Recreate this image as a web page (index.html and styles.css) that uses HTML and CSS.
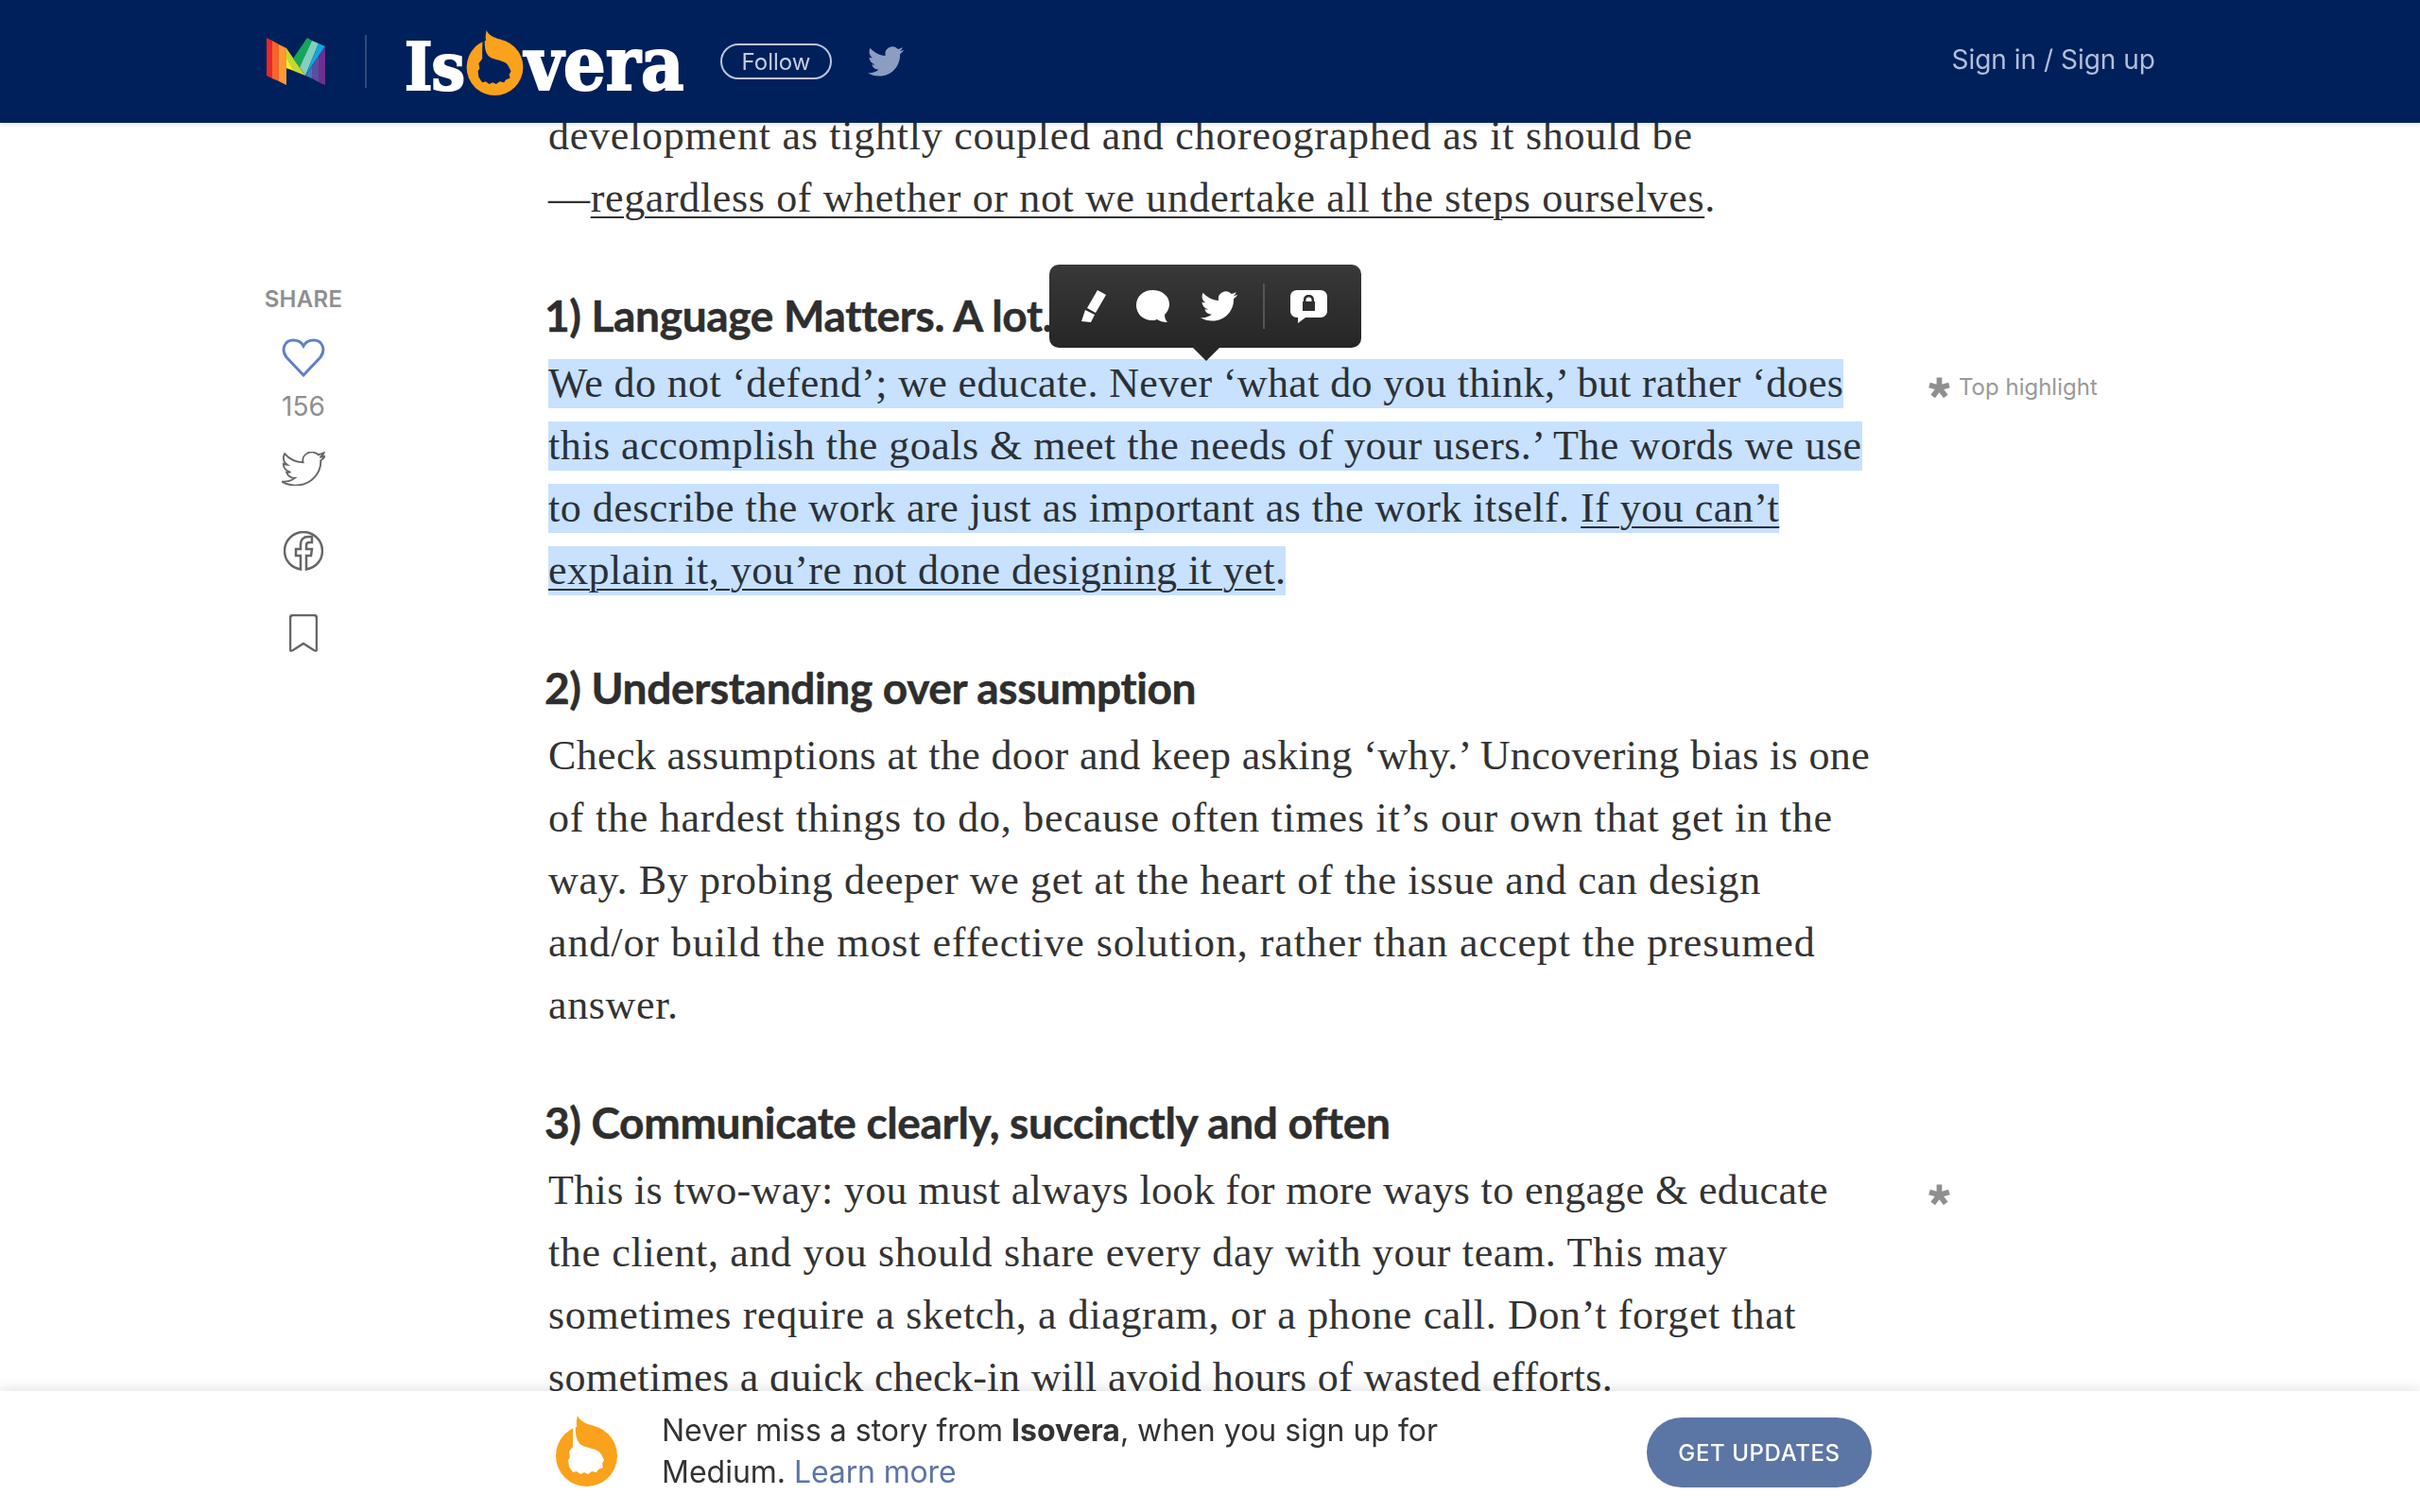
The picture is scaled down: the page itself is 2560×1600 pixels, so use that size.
FILE: index.html
```html
<!DOCTYPE html>
<html>
<head>
    <title>Isovera</title>
    <link rel="stylesheet" href="styles.css">
</head>
<body>
    <svg class="defs" width="0" height="0">
        <symbol id="flame" viewBox="0 0 65 75">
            <circle cx="32.5" cy="42.5" r="32.5" fill="#faa21b"/>
            <path fill="currentColor" d="M18.500 9L21 9C20 20 22 28 27 31C33 35 44 34 48 41L51 47L49 51L50 55L45 57L43 60L38 59L34 62L30 60L26 62L22 59L18 60L14 54L13 47L15 44L14 38L18 33C18 25 18 17 18.500 9Z"/>
            <path fill="#faa21b" d="M23 0C25 6 33 9 40 11L34 16L23 14C21 9 22 4 23 0Z"/>
        </symbol>
        <symbol id="bird" viewBox="0 2 24 20" preserveAspectRatio="none">
            <path d="M23.953 4.57a10 10 0 01-2.825.775 4.958 4.958 0 002.163-2.723c-.951.555-2.005.959-3.127 1.184a4.92 4.92 0 00-8.384 4.482C7.69 8.095 4.067 6.13 1.64 3.162a4.822 4.822 0 00-.666 2.475c0 1.71.87 3.213 2.188 4.096a4.904 4.904 0 01-2.228-.616v.06a4.923 4.923 0 003.946 4.827 4.996 4.996 0 01-2.212.085 4.936 4.936 0 004.604 3.417 9.867 9.867 0 01-6.102 2.105c-.39 0-.779-.023-1.17-.067a13.995 13.995 0 007.557 2.209c9.053 0 13.998-7.496 13.998-13.985 0-.21 0-.42-.015-.63A9.935 9.935 0 0024 4.59z"/>
        </symbol>
        <symbol id="star" viewBox="0 0 22 22">
            <path fill="none" stroke="currentColor" stroke-width="5.5" d="M11 12V1.500M11 12L21 9M11 12L17.500 20.500M11 12L4.500 20.500M11 12L1 9"/>
        </symbol>
    </svg>

    <header class="topbar">
        <svg class="m-logo" width="62" height="50" viewBox="0 0 62 50">
            <polygon fill="#e8262b" points="0,0 6,3 6,43 0,40"/>
            <polygon fill="#f4652c" points="6,3 13,7 13,46 6,43"/>
            <polygon fill="#f99a33" points="13,7 21,11 21,50 13,46"/>
            <polygon fill="#c4d82e" points="21,11 41,40 21,32"/>
            <polygon fill="#f4ee2a" points="21,22 28,34 21,32"/>
            <polygon fill="#12a85a" points="43,0 48,3 35,31 28,22"/>
            <polygon fill="#85d0bd" points="48,3 55,6 41,40 35,31"/>
            <polygon fill="#0fa8e0" points="55,6 62,9 41,40"/>
            <polygon fill="#3f77bb" points="41,40 48,30 48,43"/>
            <polygon fill="#5a4ea0" points="48,30 55,19.500 55,47 48,43"/>
            <polygon fill="#6c2f91" points="55,19.500 62,9 62,50 55,47"/>
        </svg>
        <span class="bar-divider"></span>
        <a class="brand">
            <span>Is</span><svg class="brand-flame" width="63" height="69"><use href="#flame"/></svg><span class="brand-end">vera</span>
        </a>
        <button class="follow">Follow</button>
        <svg class="bar-bird" width="38" height="32"><use href="#bird"/></svg>
        <a class="signin">Sign in / Sign up</a>
    </header>

    <main class="page">
        <aside class="rail">
            <div class="rail-label">SHARE</div>
            <svg class="rail-heart" width="46" height="41" viewBox="0 0 46 41">
                <path d="M23 39L5 20C-1 12 3 2 12 2C17 2 21 4 23 8C25 4 29 2 34 2C43 2 47 12 41 20Z"/>
            </svg>
            <div class="rail-count">156</div>
            <svg class="rail-icon rail-bird" width="46" height="36"><use href="#bird"/></svg>
            <svg class="rail-icon rail-fb" width="42" height="42" viewBox="0 0 42 42">
                <path d="M18 40.500C8 39 1 31 1 21C1 10 10 1 21 1C32 1 41 10 41 21C41 31 34 39 24 40.500V26H29L30 19H24V15C24 13 25 12 27 12H30V6H26C21 6 18 9 18 14V19H13V26H18Z"/>
            </svg>
            <svg class="rail-icon rail-mark" width="30" height="40" viewBox="0 0 30 40">
                <path d="M4 1H26C28 1 29 2 29 4V37C29 39 28 39 26 38L15 31L4 38C2 39 1 39 1 37V4C1 2 2 1 4 1Z"/>
            </svg>
        </aside>

        <article class="story">
            <div class="row">
                <p class="para"><span class="fit-3">development as tightly coupled and choreographed as it should be</span><br><span class="fit-2">—<u>regardless of whether or not we undertake all the steps ourselves</u>.</span></p>
            </div>

            <h3 class="head">1) Language Matters. A lot.
                <div class="popover">
                    <svg class="pop-pen" width="26" height="34" viewBox="0 0 26 34"><path d="M17 0L26 5L15 24L6 19ZM4 21L14 26L10 34L0 33Z"/></svg>
                    <svg class="pop-talk" width="35" height="34" viewBox="0 0 35 34"><path d="M17 0C27 0 35 6 35 15C35 20 32 24 30 26C30 29 31 32 33 34C28 34 25 33 22 31C20 32 18 32 17 32C7 32 0 25 0 16C0 7 7 0 17 0Z"/></svg>
                    <svg class="pop-bird" width="39" height="32"><use href="#bird"/></svg>
                    <span class="pop-line"></span>
                    <svg class="pop-lock" width="39" height="35" viewBox="0 0 39 35">
                        <path fill="#fff" d="M7 0H32C36 0 39 3 39 7V22C39 26 36 29 32 29H16L8 35V29H7C3 29 0 26 0 22V7C0 3 3 0 7 0Z"/>
                        <path fill="#2f2f2f" d="M13 12H14V10C14 7 16 5 19.500 5C23 5 25 7 25 10V12H26V22H13ZM16.500 12H22.500V10C22.500 8.500 21 7.500 19.500 7.500C18 7.500 16.500 8.500 16.500 10Z"/>
                    </svg>
                </div>
            </h3>
            <div class="row">
                <p class="para"><mark>We do not ‘defend’; we educate. Never ‘what do you think,’ but rather ‘does<br><span class="fit-1">this accomplish the goals &amp; meet the needs of your users.’ The words we use</span><br><span class="fit-1">to describe the work are just as important as the work itself. <u>If you can’t</u></span><br><span class="fit-1"><u>explain it, you’re not done designing it yet</u>.</span></mark></p>
                <div class="note"><svg class="note-star" width="23" height="23"><use href="#star"/></svg><span>Top highlight</span></div>
            </div>

            <h3 class="head">2) Understanding over assumption</h3>
            <div class="row">
                <p class="para">Check assumptions at the door and keep asking ‘why.’ Uncovering bias is one<br><span class="fit-3">of the hardest things to do, because often times it’s our own that get in the</span><br><span class="fit-2">way. By probing deeper we get at the heart of the issue and can design</span><br><span class="fit-4">and/or build the most effective solution, rather than accept the presumed</span><br><span class="fit-2">answer.</span></p>
            </div>

            <h3 class="head">3) Communicate clearly, succinctly and often</h3>
            <div class="row">
                <p class="para">This is two-way: you must always look for more ways to engage &amp; educate<br><span class="fit-2">the client, and you should share every day with your team. This may</span><br><span class="fit-2">sometimes require a sketch, a diagram, or a phone call. Don’t forget that</span><br>sometimes a quick check-in will avoid hours of wasted efforts.</p>
                <div class="note"><svg class="note-star" width="23" height="23"><use href="#star"/></svg></div>
            </div>
        </article>
    </main>

    <footer class="promo">
        <svg class="promo-flame" width="67" height="75"><use href="#flame"/></svg>
        <p class="promo-text">Never miss a story from <b>Isovera</b>, when you sign up for<br>Medium. <a>Learn more</a></p>
        <button class="updates">GET UPDATES</button>
    </footer>
</body>
</html>
```

FILE: styles.css
```css
html, body {
    height: 100%;
}

body {
    margin: 0;
    background: #fff;
    color: #2b2b2b;
    font-family: Inter, sans-serif;
    overflow: hidden;
}

.defs {
    position: absolute;
}

/* top bar */
.topbar {
    position: fixed;
    top: 0;
    left: 0;
    right: 0;
    z-index: 5;
    height: 130px;
    box-sizing: border-box;
    padding: 0 280px 0 282px;
    display: flex;
    align-items: center;
    background: #00205b;
    box-shadow: 0 2px 4px rgba(0,0,0,0.1);
}

.m-logo {
    flex: none;
}

.bar-divider {
    width: 2px;
    height: 56px;
    margin: 0 42px 0 42px;
    background: #2f4a7c;
}

.brand {
    display: flex;
    align-items: baseline;
    width: 295px;
    margin-left: -2px;
    margin-right: 2px;
    color: #fff;
    font-family: "DejaVu Serif Condensed", "DejaVu Serif", serif;
    font-weight: 700;
    font-size: 70px;
    line-height: 69px;
    letter-spacing: -1px;
    -webkit-text-stroke: 2px #fff;
}

.brand-flame {
    flex: none;
    margin-left: 1px;
    color: #00205b;
    transform: translateY(6px);
}

.brand-end {
    font-size: 78px;
    letter-spacing: 0.2px;
}

.follow {
    width: 118px;
    height: 38px;
    margin-left: 37px;
    padding: 0;
    background: none;
    border: 2px solid #b9c5dd;
    border-radius: 19px;
    color: #c3cde1;
    font-family: Inter, sans-serif;
    font-size: 24px;
}

.bar-bird {
    margin-left: 38px;
    fill: #8c9dc2;
}

.signin {
    margin-left: auto;
    margin-top: -5px;
    color: #b2bfd9;
    font-size: 28px;
}

/* page columns */
.page {
    display: flex;
    padding-left: 261px;
}

.rail {
    width: 120px;
    padding-top: 304px;
    margin-right: 199px;
    display: flex;
    flex-direction: column;
    align-items: center;
    flex: none;
}

.rail-label {
    color: #8f8f8f;
    font-size: 24px;
    line-height: 26px;
    font-weight: 600;
    letter-spacing: 0.3px;
}

.rail-heart {
    margin-top: 28px;
}

.rail-heart path {
    fill: none;
    stroke: #5f82c4;
    stroke-width: 3;
}

.rail-count {
    margin-top: 15px;
    color: #8f8f8f;
    font-size: 28px;
    line-height: 32px;
}

.rail-icon {
    display: block;
    fill: none;
    stroke: #666;
    stroke-width: 2.500;
}

.rail-bird {
    margin-top: 32px;
    stroke-width: 1;
}

.rail-fb {
    margin-top: 48px;
}

.rail-mark {
    margin-top: 46px;
}

/* article */
.story {
    padding-top: 111px;
}

.row {
    display: flex;
    width: 1700px;
}

.para {
    width: 1460px;
    flex: none;
    margin: 0;
    font-family: "Liberation Serif", serif;
    font-size: 44px;
    line-height: 66px;
    letter-spacing: 0.36px;
    color: #333;
}

/* per-line tracking so line ends land where the original serif put them */
.fit-1 {
    letter-spacing: 0.48px;
}

.fit-2 {
    letter-spacing: 0.65px;
}

.fit-3 {
    letter-spacing: 0.76px;
}

.fit-4 {
    letter-spacing: 0.92px;
}

.para mark {
    background: #c7e1ff;
    color: #2a3038;
    padding: 1px 0 2px;
}

.para u {
    text-underline-offset: 5px;
    text-decoration-thickness: 2px;
}

.head {
    position: relative;
    margin: 63px 0 11px -4px;
    font-family: Lato, sans-serif;
    font-weight: 700;
    font-size: 46px;
    line-height: 56px;
    letter-spacing: -0.33px;
    color: #2e2e2e;
    -webkit-text-stroke: 0.5px #2e2e2e;
}

.note {
    display: flex;
    align-items: center;
    gap: 9px;
    height: 66px;
    margin-top: 3px;
    color: #999;
    font-size: 24px;
}

.note-star {
    color: #8f8f8f;
}

/* selection popover */
.popover {
    position: absolute;
    left: 534px;
    top: -26px;
    width: 330px;
    height: 88px;
    box-sizing: border-box;
    padding-left: 34px;
    display: flex;
    align-items: center;
    background: linear-gradient(#383838, #262626);
    border-radius: 10px;
    fill: #fff;
    -webkit-text-stroke: 0;
}

.popover::after {
    content: "";
    position: absolute;
    left: 152px;
    bottom: -14px;
    width: 0;
    height: 0;
    border-left: 14px solid transparent;
    border-right: 14px solid transparent;
    border-top: 14px solid #262626;
}

.pop-talk {
    margin-left: 32px;
}

.pop-bird {
    margin-left: 33px;
}

.pop-line {
    width: 2px;
    height: 48px;
    margin: 0 27px;
    background: #555;
}

/* bottom promo */
.promo {
    position: fixed;
    left: 0;
    right: 0;
    bottom: 0;
    z-index: 5;
    height: 128px;
    box-sizing: border-box;
    padding: 0 580px 0 587px;
    display: flex;
    align-items: center;
    background: #fff;
    box-shadow: 0 -2px 14px rgba(0,0,0,0.12);
}

.promo-flame {
    flex: none;
    margin-top: -2px;
    color: #fff;
}

.promo-text {
    margin: 0 0 0 46px;
    font-size: 32px;
    line-height: 44px;
    color: #333;
}

.promo-text a {
    color: #5b75a5;
    letter-spacing: -0.15px;
}

.updates {
    margin-left: auto;
    margin-top: 2px;
    width: 238px;
    height: 74px;
    padding: 0;
    border: none;
    border-radius: 37px;
    background: #5b75a5;
    color: #fff;
    font-family: Inter, sans-serif;
    font-size: 24px;
    font-weight: 500;
    letter-spacing: 0.6px;
}
```
